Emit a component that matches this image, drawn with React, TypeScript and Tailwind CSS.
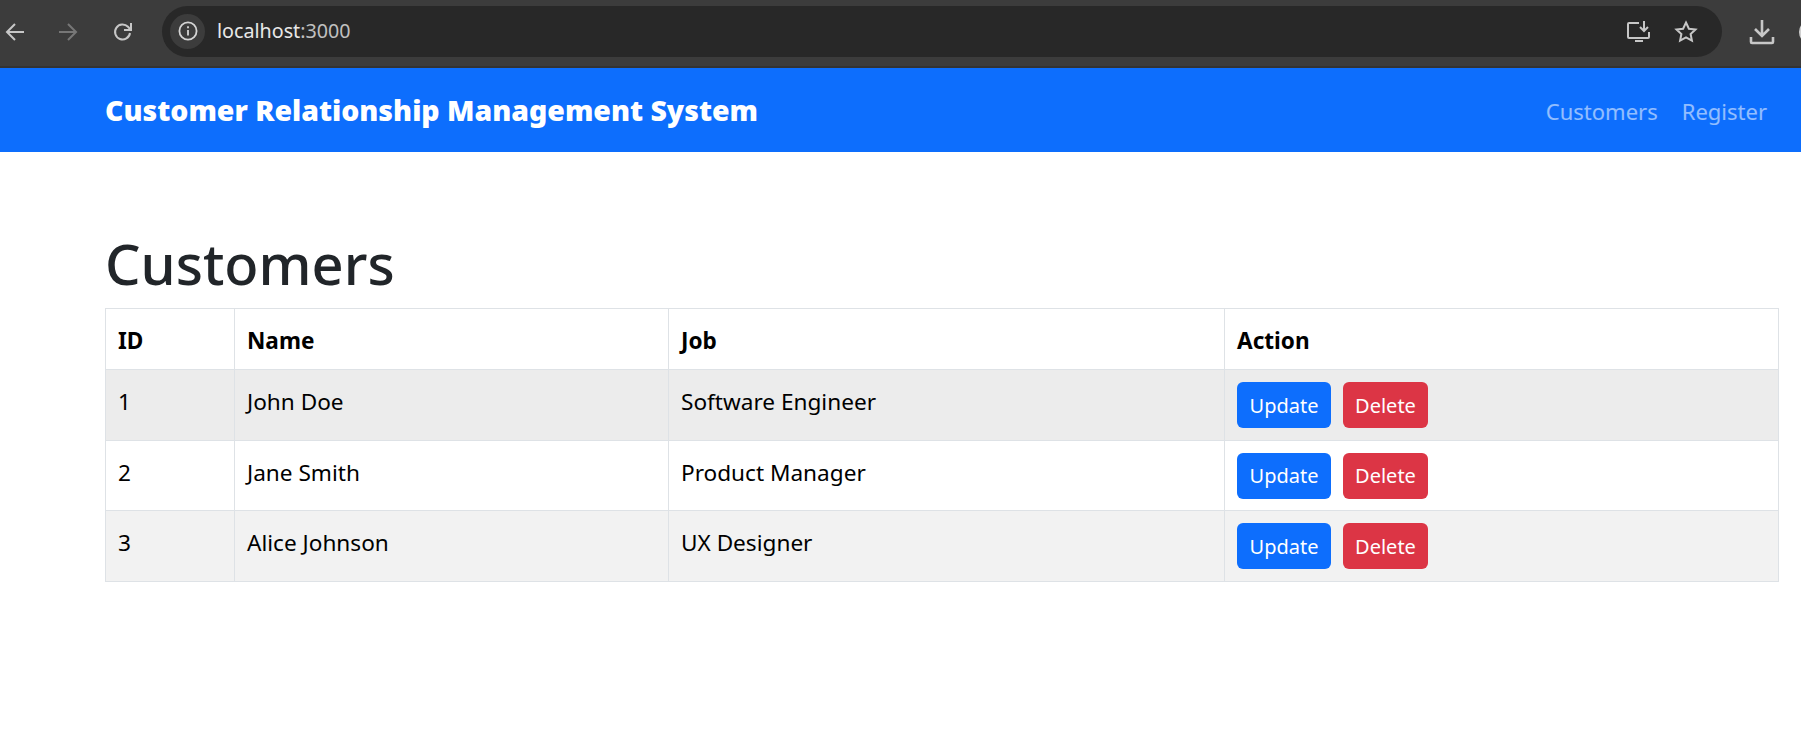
const rows = [
  { id: 1, name: "John Doe", job: "Software Engineer", bg: "bg-[#ececec]" },
  { id: 2, name: "Jane Smith", job: "Product Manager", bg: "bg-white" },
  { id: 3, name: "Alice Johnson", job: "UX Designer", bg: "bg-[#f2f2f2]" },
];

const cell = "border border-[#dee2e6] px-[12px] align-top";

function Btn({ label, color, width }: { label: string; color: string; width: string }) {
  return (
    <button className={`${color} ${width} h-[46px] rounded-[6px] text-white text-[20px] leading-[30px] pt-[1px]`}>{label}</button>
  );
}

export default function App() {
  return (
    <div className="w-[1801px] h-[753px] overflow-hidden bg-white font-['Noto_Sans','Open_Sans',sans-serif]">
      <div className="h-[68px] bg-[#3c3c3c] border-b-2 border-[#333] flex items-center relative">
        <div className="w-[162px] shrink-0 relative h-full">
          <svg className="absolute left-[5px] top-[21px]" width="20" height="22" viewBox="0 0 20 22" fill="none" stroke="#c7c7c7" strokeWidth="2"><path d="M19 11H2M10 3l-8 8 8 8" /></svg>
          <svg className="absolute left-[58px] top-[21px]" width="20" height="22" viewBox="0 0 20 22" fill="none" stroke="#777" strokeWidth="2"><path d="M1 11h17M10 3l8 8-8 8" /></svg>
          <svg className="absolute left-[113px] top-[22px]" width="20" height="20" viewBox="0 0 20 20" fill="none" stroke="#c7c7c7" strokeWidth="2"><path d="M17 11a7.5 7.5 0 1 1-2-6.2L17 7" /><path d="M18 1v7h-7" fill="none" /></svg>
        </div>
        <div className="w-[1560px] h-[51px] mb-[4px] shrink-0 bg-[#282828] rounded-full flex items-center pl-[8px] pr-[24px]">
          <div className="w-[35px] h-[35px] rounded-full bg-[#3c3c3c] flex items-center justify-center">
            <svg width="20" height="20" viewBox="0 0 20 20" fill="none" stroke="#d4d4d4" strokeWidth="1.8"><circle cx="10" cy="10" r="8.6" /><path d="M10 9v5.5M10 5.2v2" /></svg>
          </div>
          <span className="ml-[12px] text-[19.7px] text-[#e8e8e8] font-['Noto_Sans',sans-serif]">localhost<span className="text-[#c0c0c0]">:3000</span></span>
          <div className="ml-auto flex items-center gap-[23px]">
            <svg width="25" height="23" viewBox="0 0 25 23" fill="none" stroke="#c7c7c7" strokeWidth="2"><path d="M13 3H3a1 1 0 0 0-1 1v13a1 1 0 0 0 1 1h19a1 1 0 0 0 1-1v-5" /><path d="M18 1v9M14 7l4 4 4-4M9 21h8" /></svg>
            <svg width="24" height="23" viewBox="0 0 24 23" fill="none" stroke="#c7c7c7" strokeWidth="2"><path d="M12 2.5l2.9 6.2 6.6.8-4.9 4.5 1.3 6.6L12 17.3l-5.9 3.3 1.3-6.6L2.500 9.500l6.600-.8z" /></svg>
          </div>
        </div>
        <svg className="ml-[27px] mb-[2px] shrink-0" width="26" height="26" viewBox="0 0 26 26" fill="none" stroke="#c7c7c7" strokeWidth="2.6"><path d="M13 1v16M6 10l7 7 7-7M2 18v5a1 1 0 0 0 1 1h20a1 1 0 0 0 1-1v-5" /></svg>
        <div className="ml-[24px] w-[24px] h-[24px] rounded-full border-[3px] border-[#d0d0d0] mb-[2px] shrink-0" />
      </div>

      <nav className="h-[84px] bg-[#0d6efd] flex items-center pl-[105px] pr-[34px]">
        <span className="text-white font-black text-[28.45px] leading-none pt-[1px]">Customer Relationship Management System</span>
        <div className="ml-auto flex gap-[24px] text-[22px] text-white/55 pt-[2px]">
          <span>Customers</span>
          <span>Register</span>
        </div>
      </nav>

      <main className="pl-[105px] pr-[22px] pt-[76px]">
        <h1 className="text-[56px] leading-[70px] font-medium text-[#212529] mb-[10px] h-[70px]">Customers</h1>
        <table className="w-[1673px] border-collapse table-fixed text-black text-[22.6px] leading-[32px]">
          <colgroup>
            <col className="w-[129px]" />
            <col className="w-[434px]" />
            <col className="w-[556px]" />
            <col className="w-[554px]" />
          </colgroup>
          <thead>
            <tr className="h-[61px] font-bold">
              <th className={`${cell} text-left pt-[16px] font-bold`}>ID</th>
              <th className={`${cell} text-left pt-[16px] font-bold`}>Name</th>
              <th className={`${cell} text-left pt-[16px] font-bold`}>Job</th>
              <th className={`${cell} text-left pt-[16px] font-bold`}>Action</th>
            </tr>
          </thead>
          <tbody>
            {rows.map((r) => (
              <tr key={r.id} className={`h-[70.5px] ${r.bg}`}>
                <td className={`${cell} pt-[16px]`}>{r.id}</td>
                <td className={`${cell} pt-[16px]`}>{r.name}</td>
                <td className={`${cell} pt-[16px]`}>{r.job}</td>
                <td className={`${cell} pt-[12px]`}>
                  <div className="flex gap-[12px]">
                    <Btn label="Update" color="bg-[#0d6efd]" width="w-[94px]" />
                    <Btn label="Delete" color="bg-[#dc3545]" width="w-[85px]" />
                  </div>
                </td>
              </tr>
            ))}
          </tbody>
        </table>
      </main>
    </div>
  );
}
